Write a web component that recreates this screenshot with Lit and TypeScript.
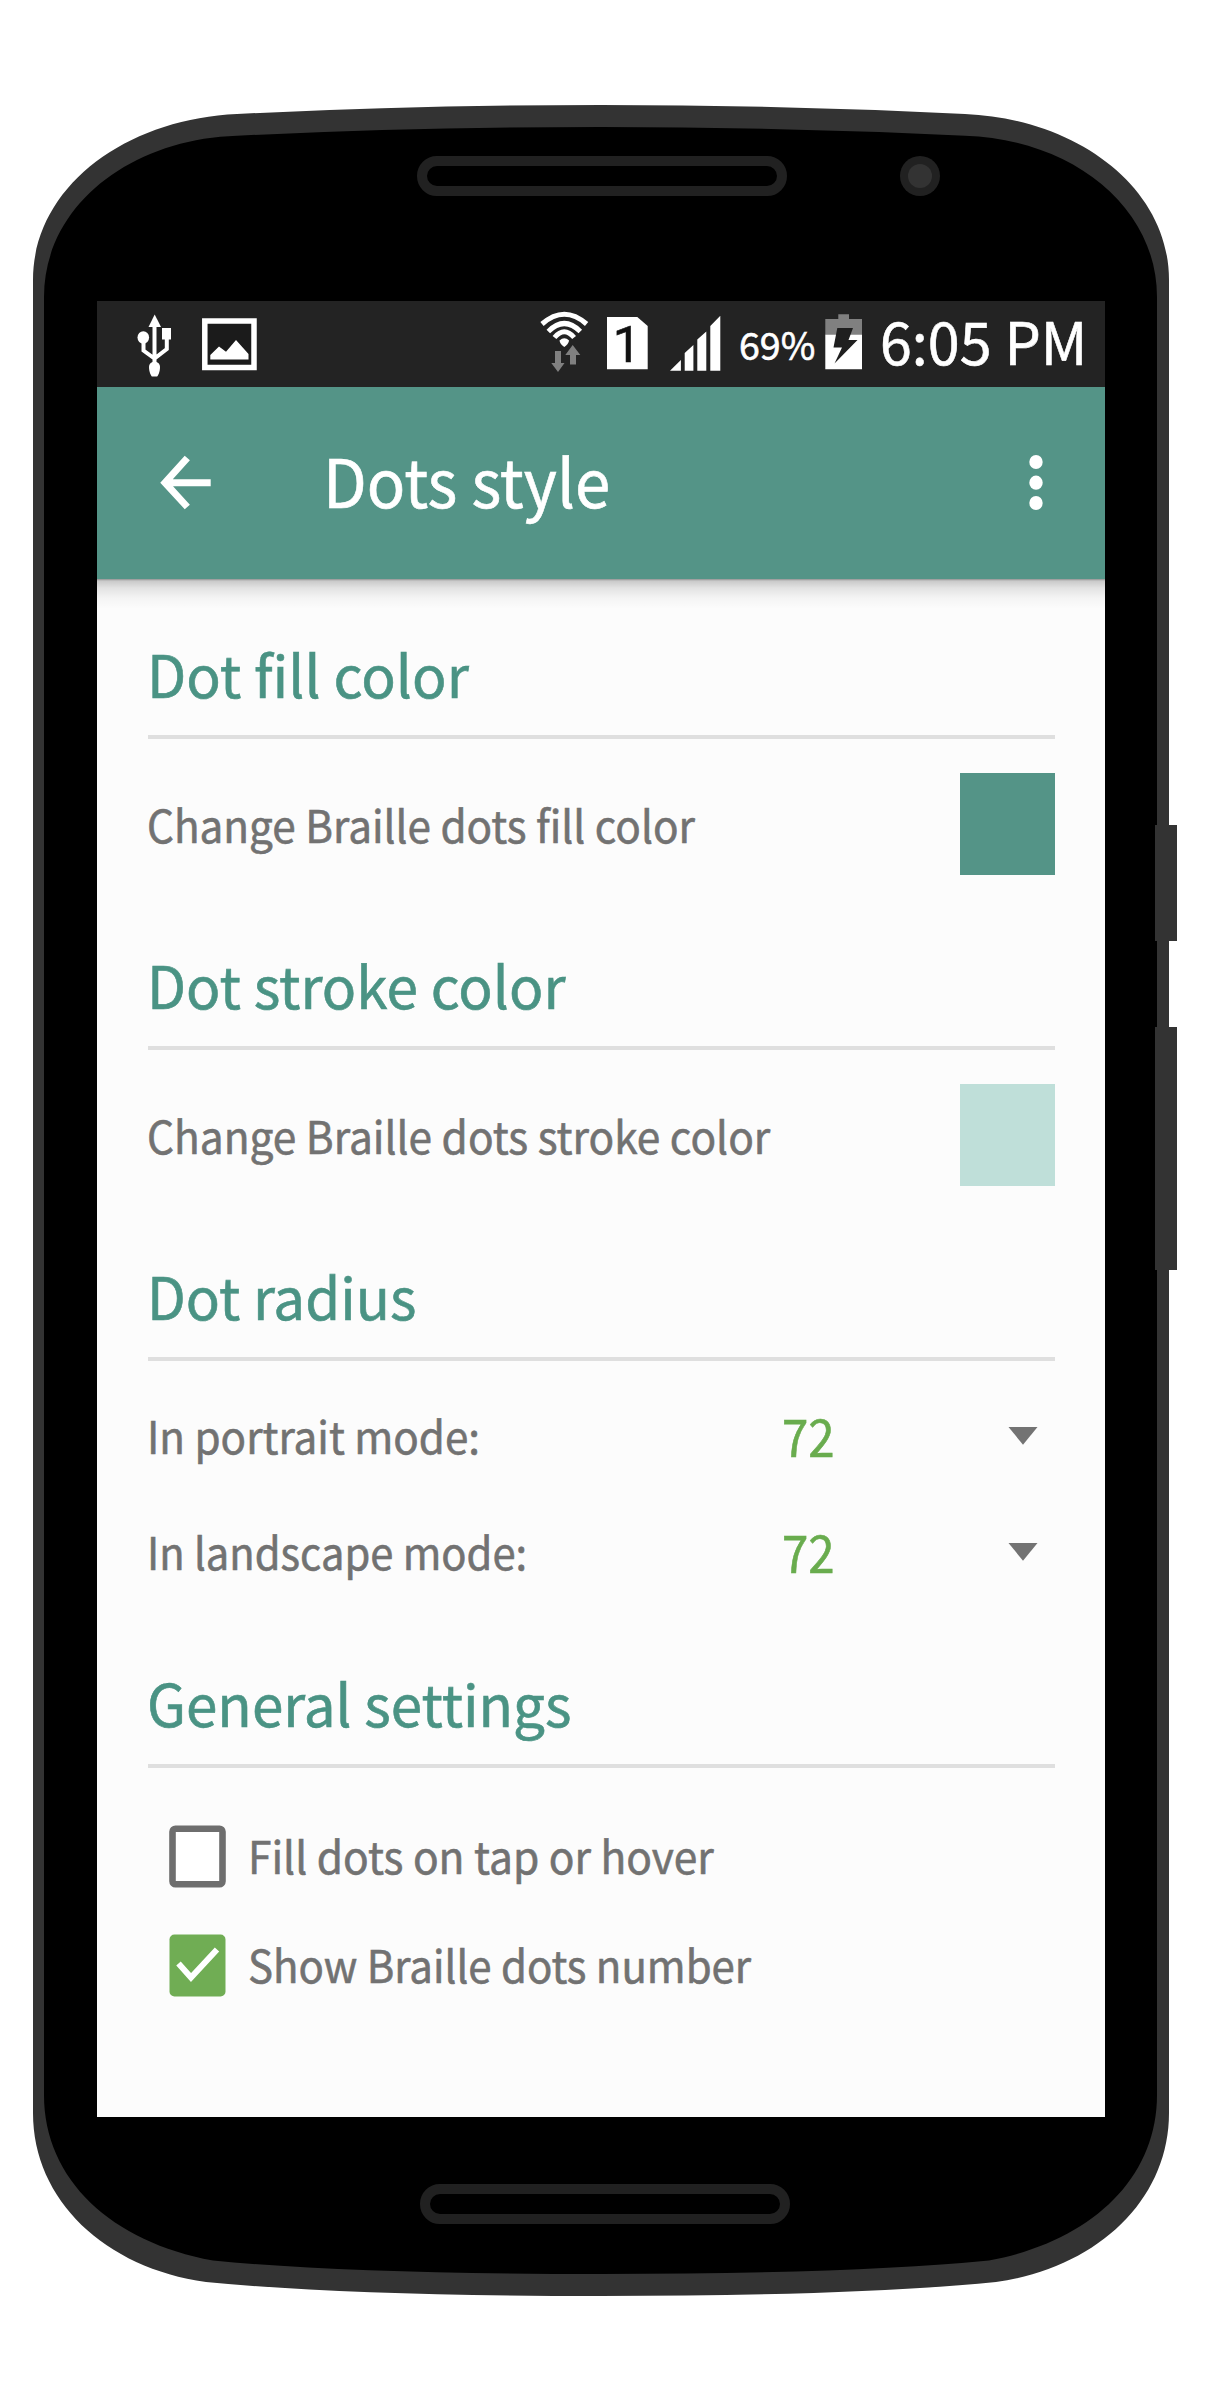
import { LitElement, html, css, svg } from "lit";
import { customElement, property } from "lit/decorators.js";
import { styleMap } from "lit/directives/style-map.js";

/** A single line of text whose glyphs are condensed horizontally. */
@customElement("condensed-text")
export class CondensedText extends LitElement {
  @property({ type: Number }) scale = 1;

  static styles = css`
    :host {
      display: block;
      white-space: nowrap;
      line-height: 1.45;
      -webkit-text-stroke: 0.6px currentColor;
    }
    .glyphs {
      display: inline-block;
      vertical-align: top;
      transform-origin: left center;
    }
  `;

  render() {
    return html`<span class="glyphs" style=${styleMap({ transform: `scaleX(${this.scale})` })}><slot></slot></span>`;
  }
}

@customElement("phone-frame")
export class PhoneFrame extends LitElement {
  static styles = css`
    :host {
      display: block;
      position: relative;
      width: 1213px;
      height: 2400px;
      box-sizing: border-box;
      padding: 301px 108px 283px 97px;
    }
    .shell {
      position: absolute;
      inset: 0;
      width: 1213px;
      height: 2400px;
    }
    .screen {
      position: relative;
      height: 100%;
      overflow: hidden;
    }
  `;

  render() {
    return html`
      <svg class="shell" viewBox="0 0 1213 2400">
        <g fill="#333">
          <rect x="1155" y="825" width="22" height="116" />
          <rect x="1155" y="1027" width="22" height="243" />
          <path
            d="M33 280C33 188 124 119 237 114Q420 105 601 105Q782 105 965 114C1078 119 1169 188 1169 280V2113C1169 2200 1097 2268 996 2282Q852 2296 601 2296Q350 2296 206 2282C105 2268 33 2200 33 2113Z"
          />
        </g>
        <path
          d="M44 297C44 206 130 139 237 135.7Q420 127 601 127Q782 127 965 135.7C1071 139 1157 206 1157 297V2095C1157 2180 1089 2242 989 2260.5Q852 2274 601 2274Q350 2274 213 2260.5C112 2242 44 2180 44 2095Z"
        />
        <g fill="#333">
          <rect x="1155" y="825" width="3" height="116" />
          <rect x="1155" y="1027" width="3" height="243" />
        </g>
        <rect x="422" y="161" width="360" height="30" rx="15" fill="none" stroke="#212121" stroke-width="10" />
        <circle cx="920" cy="176" r="20" fill="#212121" />
        <circle cx="920" cy="176" r="12" fill="#333" />
        <rect x="425" y="2189" width="360" height="30" rx="15" fill="none" stroke="#212121" stroke-width="10" />
      </svg>
      <div class="screen"><slot></slot></div>
    `;
  }
}

@customElement("status-bar")
export class StatusBar extends LitElement {
  static styles = css`
    :host {
      display: flex;
      align-items: center;
      height: 86px;
      box-sizing: border-box;
      padding-left: 23px;
      background: #232323;
      color: #fff;
    }
    svg {
      display: block;
      flex: none;
      height: 86px;
    }
    .usb { width: 60px; }
    .picture { width: 70px; margin-left: 15px; }
    .wifi { width: 60px; margin-left: 270px; }
    .sim { width: 45px; margin-left: 10px; }
    .signal { width: 60px; margin-left: 15px; }
    .percent { width: 78px; margin-left: 14px; font-size: 38.5px; }
    .battery { width: 44px; margin-left: 5px; }
    .clock { margin-left: 13.5px; margin-top: -9px; font-size: 59px; }
    .sim-number { font: 50px Roboto, "Noto Sans", sans-serif; }
  `;

  render() {
    return html`
      <svg class="usb" viewBox="120 301 60 86" fill="#fff">
        <path d="M154.7 314.5L161 327H148.5Z" />
        <path d="M154.5 325V364M143.5 340V350.5L154.5 358.5L166.8 349V338" fill="none" stroke="#fff" stroke-width="4" />
        <ellipse cx="143.3" cy="337.5" rx="5.8" ry="6.2" />
        <rect x="162" y="328" width="9" height="11.5" />
        <path d="M149 367C149 360 160 360 160 367C160 372 158 376 157 376.5H152C151 376 149 372 149 367Z" />
      </svg>
      <svg class="picture" viewBox="195 301 70 86">
        <rect x="204.8" y="321" width="49.2" height="46.5" fill="#1b1b1b" stroke="#fff" stroke-width="5.5" />
        <path d="M210.3 359.5V355L219 346.5L226 351.7L236 340L248.5 354V359.5Z" fill="#fff" />
      </svg>
      <svg class="wifi" viewBox="535 301 60 86">
        <g fill="none" stroke="#fff" stroke-width="5">
          <path d="M542 324Q564.3 304.5 586.6 324" />
          <path d="M548.3 331.5Q564.3 315.5 580.3 331.5" />
          <path d="M554.5 337.5Q564.3 326 574.1 337.5" />
        </g>
        <path d="M559.5 340.5Q564.3 336 569.1 340.5Q568.5 344 564.3 347Q560 344 559.5 340.5Z" fill="#fff" />
        <path d="M555 351H561V363H564.5L558 372L551.3 363H555ZM572.7 345L580.3 355H576V364.5H570V355H565.3Z" fill="#808080" />
      </svg>
      <svg class="sim" viewBox="605 301 45 86">
        <path d="M607 317H637.3L647.7 326V369.3H607Z" fill="#fff" />
        <text class="sim-number" x="612.8" y="362.3" fill="#111" stroke="#111" stroke-width=".6">1</text>
      </svg>
      <svg class="signal" viewBox="665 301 60 86" fill="#fff">
        <path
          d="M670 370.7L680.9 360V370.7ZM684.7 370.7V353L693.4 345V370.7ZM697.3 370.7V339.5L706.3 331.5V370.7ZM710.3 370.7V326L720.3 315.7V370.7Z"
        />
      </svg>
      <condensed-text class="percent" scale="0.976">69%</condensed-text>
      <svg class="battery" viewBox="822 301 44 86">
        <path d="M838.3 319V314.3H849V319H862V335H825.3V319Z" fill="#808080" />
        <path d="M825.3 334.7H862V369.3H825.3Z" fill="#fff" />
        <path d="M837.3 328H853L848.5 340H857.5L834.5 363.5L842 347.5H833.5Z" fill="#1f1f1f" />
      </svg>
      <condensed-text class="clock" scale="0.973">6:05 PM</condensed-text>
    `;
  }
}

@customElement("app-bar")
export class AppBar extends LitElement {
  static styles = css`
    :host {
      display: flex;
      align-items: center;
      position: relative;
      z-index: 1;
      height: 192px;
      box-sizing: border-box;
      padding: 0 49px 0 57px;
      background: #549487;
      color: #fff;
    }
    :host::after {
      content: "";
      position: absolute;
      left: 0;
      right: 0;
      top: 100%;
      height: 30px;
      background: linear-gradient(
        rgba(0, 0, 0, 0.42) 0,
        rgba(0, 0, 0, 0.2) 2px,
        rgba(0, 0, 0, 0.1) 9px,
        rgba(0, 0, 0, 0.03) 19px,
        transparent 30px
      );
    }
    svg {
      display: block;
      flex: none;
      width: 64px;
      height: 64px;
    }
    .more { width: 40px; }
    .title {
      flex: 1;
      margin: -8px 0 0 105px;
      font-size: 66.5px;
    }
  `;

  render() {
    return html`
      <svg viewBox="154 451 64 64" fill="none" stroke="#fff" stroke-width="7">
        <path d="M210.7 482.7H165M187.3 458L165 482.7L187.3 507" />
      </svg>
      <condensed-text class="title" scale="0.957">Dots style</condensed-text>
      <svg class="more" viewBox="1016 451 40 64" fill="#fff">
        ${[462, 482.7, 503].map((y) => svg`<ellipse cx="1036" cy=${y} rx="6.7" ry="7.1" />`)}
      </svg>
    `;
  }
}

@customElement("settings-section")
export class SettingsSection extends LitElement {
  @property() heading = "";
  @property({ type: Number }) scale = 0.98;

  static styles = css`
    :host { display: block; }
    .heading {
      height: 84px;
      padding-bottom: 20px;
      border-bottom: 4px solid #dfdfdf;
      color: #4a9384;
      font-size: 58px;
      line-height: 84px;
    }
    .heading condensed-text { margin-left: -1.5px; }
  `;

  render() {
    return html`
      <div class="heading"><condensed-text scale=${this.scale}>${this.heading}</condensed-text></div>
      <slot></slot>
    `;
  }
}

@customElement("app-root")
export class AppRoot extends LitElement {
  static styles = css`
    :host {
      display: block;
      width: 1213px;
      height: 2400px;
      background: #fff;
      font-family: "Noto Sans CJK SC", "Noto Sans", sans-serif;
    }
    .content {
      height: 1538px;
      box-sizing: border-box;
      padding: 52px 50px 0 51px;
      background: #fcfcfc;
      color: #727272;
      font-size: 44.5px;
    }
    .row {
      display: flex;
      align-items: center;
    }
    .label {
      flex: 1;
      margin-left: -1px;
    }
    .color-row {
      height: 102px;
      padding: 34px 0 67px;
    }
    .swatch {
      width: 95px;
      height: 102px;
    }
    .fill { background: #549487; }
    .stroke { background: #bfdfd9; }
    .radius-rows { padding: 16px 0 50.5px; }
    .radius-row { height: 116px; }
    .value {
      width: 226.5px;
      color: #69ac4e;
      font-size: 51.5px;
    }
    .arrow {
      display: block;
      width: 30px;
      height: 18px;
      margin: 2px 17px 0 0;
    }
    .check-rows { padding: 34px 0 0 21px; }
    .check-row {
      height: 109px;
      gap: 21.5px;
    }
    .check-row .label { margin: -2px 0 0 0; }
    .checkbox {
      display: block;
      width: 57px;
      height: 63px;
    }
  `;

  private radiusRow(label: string, scale: number) {
    return html`
      <div class="row radius-row">
        <condensed-text class="label" scale=${scale}>${label}</condensed-text>
        <condensed-text class="value" scale="0.92">72</condensed-text>
        <svg class="arrow" viewBox="0 0 30 18"><path d="M0.5 0H29.5L15 17.7Z" fill="#737373" /></svg>
      </div>
    `;
  }

  private checkRow(label: string, scale: number, checked: boolean) {
    return html`
      <div class="row check-row">
        <svg class="checkbox" viewBox="0 0 57 63">
          ${checked
            ? svg`<rect x=".5" y=".5" width="56" height="62" rx="5" fill="#70ad54" />
                <path d="M9.5 29.5L22 43.5L48 15.5" fill="none" stroke="#fff" stroke-width="6" />`
            : svg`<rect x="3.5" y="3.8" width="50" height="55.4" rx="3" fill="#fff" stroke="#6e6e6e" stroke-width="6.6" />`}
        </svg>
        <condensed-text class="label" scale=${scale}>${label}</condensed-text>
      </div>
    `;
  }

  render() {
    return html`
      <phone-frame>
        <status-bar></status-bar>
        <app-bar></app-bar>
        <div class="content">
          <settings-section heading="Dot fill color" scale="0.984">
            <div class="row color-row">
              <condensed-text class="label" scale="0.949">Change Braille dots fill color</condensed-text>
              <div class="swatch fill"></div>
            </div>
          </settings-section>
          <settings-section heading="Dot stroke color">
            <div class="row color-row">
              <condensed-text class="label" scale="0.953">Change Braille dots stroke color</condensed-text>
              <div class="swatch stroke"></div>
            </div>
          </settings-section>
          <settings-section heading="Dot radius" scale="0.974">
            <div class="radius-rows">
              ${this.radiusRow("In portrait mode:", 0.947)} ${this.radiusRow("In landscape mode:", 0.937)}
            </div>
          </settings-section>
          <settings-section heading="General settings" scale="0.976">
            <div class="check-rows">
              ${this.checkRow("Fill dots on tap or hover", 0.954, false)}
              ${this.checkRow("Show Braille dots number", 0.942, true)}
            </div>
          </settings-section>
        </div>
      </phone-frame>
    `;
  }
}
